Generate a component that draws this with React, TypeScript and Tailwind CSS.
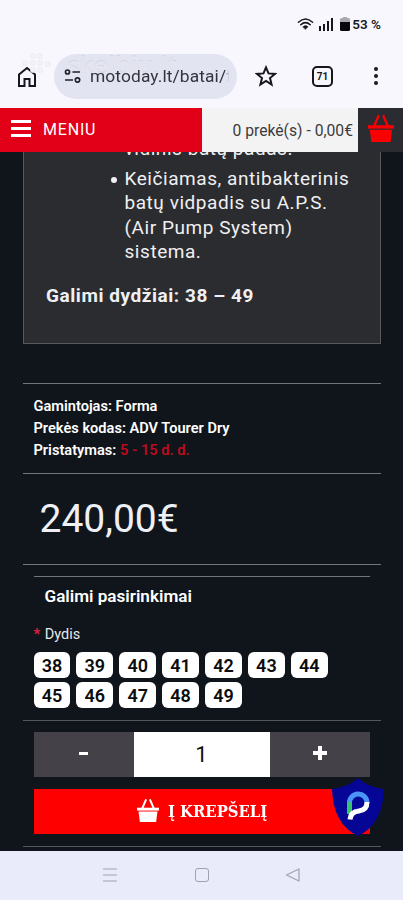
import React from "react"

const sizes = ["38", "39", "40", "41", "42", "43", "44", "45", "46", "47", "48", "49"]

const Basket = ({ className }: { className?: string }) => (
    <svg viewBox="0 0 26 27" className={className} fill="currentColor">
        <path d="M0 10.2h26v3.4H0z" />
        <path d="M1.8 14.800h22.4L22.6 27H3.4z" />
        <path d="M6.2 11 10.4 1.2M19.8 11 15.6 1.2" fill="none" stroke="currentColor" strokeWidth="2.4" strokeLinecap="round" />
    </svg>
)

const StatusBar = () => (
    <div className="h-12 flex items-center justify-end pr-[22px] shrink-0">
        <svg viewBox="0 0 18 14" className="w-[17px] h-[14px] mr-[5px]" fill="none" stroke="#17171f" strokeLinecap="round">
            <path d="M1.5 5.2Q9-1.8 16.5 5.2" strokeWidth="1.5" />
            <path d="M4 7.8q5-4.4 10 0" strokeWidth="1.7" />
            <path d="M6.3 9.8Q9 7.6 11.7 9.8L9 12.6z" fill="#17171f" strokeWidth=".6" />
        </svg>
        <div className="flex items-end gap-[2px] h-[13px] mr-[7px]">
            <div className="w-[2px] h-[5px] bg-[#17171f]" />
            <div className="w-[2px] h-[7px] bg-[#17171f]" />
            <div className="w-[2px] h-[10px] bg-[#17171f]" />
            <div className="w-[2px] h-[13px] bg-[#17171f]" />
        </div>
        <svg viewBox="0 0 10 14" className="w-[10px] h-[14px] mr-[2px]">
            <path d="M3 0h4v1h1.500q1.500 0 1.500 1.500V7H0V2.500Q0 1 1.500 1H3z" fill="#a9a9b2" />
            <path d="M0 5h10v7.500q0 1.500-1.500 1.500h-7Q0 14 0 12.500z" fill="#08080c" />
        </svg>
        <div className="text-[13.500px] font-semibold text-[#1a1a20] font-['Roboto',sans-serif]">53 %</div>
    </div>
)

const Watermark = () => (
    <div className="absolute left-[21px] top-[51px] flex items-center gap-[14px] pointer-events-none">
        <svg viewBox="0 0 32 26" className="w-8 h-[26px]" fill="#f3f2f8" stroke="#e6e5ee" strokeWidth=".6">
            <circle cx="12" cy="4" r="2.600" />
            <circle cx="19" cy="4" r="2.600" />
            <circle cx="4" cy="11" r="2.600" />
            <circle cx="12" cy="11" r="2.600" />
            <circle cx="19" cy="11" r="2.600" />
            <circle cx="27" cy="12" r="2.600" />
            <circle cx="12" cy="18" r="2.600" />
            <circle cx="19" cy="18" r="2.600" />
        </svg>
        <div className="text-[25px] leading-7 font-semibold text-[#e8e8f2]/80 [text-shadow:0_-1px_0_#d5d6e1] font-['Open_Sans',sans-serif]">skelbiu.lt</div>
    </div>
)

const BrowserBar = () => (
    <div className="h-[60px] flex items-center pl-[17px] pb-[4px] shrink-0">
        <svg viewBox="0 0 20 22" className="w-5 h-[22px] mt-[1px]" fill="none" stroke="#17171f" strokeWidth="2">
            <path d="M2 8.500 10 2l8 6.500V20h-5.500v-7h-5v7H2z" />
        </svg>
        <div className="ml-[17px] w-[183px] h-[45px] rounded-full bg-[#e3e4f2] flex items-center pl-[10px] overflow-hidden">
            <svg viewBox="0 0 17 14" className="relative z-10 w-[17px] h-[14px] shrink-0" fill="none" stroke="#22222b" strokeWidth="1.700">
                <circle cx="3.500" cy="3" r="2" />
                <path d="M8.500 3H16M1 11h8" />
                <circle cx="13.500" cy="11" r="2.200" />
            </svg>
            <div className="relative z-10 ml-[9px] w-[139px] overflow-hidden whitespace-nowrap text-[17.400px] text-[#33343f] font-['Roboto',sans-serif] tracking-[0.1px] [mask-image:linear-gradient(to_right,black_97%,transparent)]">motoday.lt/batai/f</div>
        </div>
        <svg viewBox="0 0 22 22" className="ml-[18px] w-[22px] h-[22px]" fill="none" stroke="#17171f" strokeWidth="2">
            <path d="m11 2.400 2.500 6 6.500.5-5 4.200 1.600 6.400-5.600-3.500-5.600 3.500L7 13.100 2 8.900l6.500-.5z" />
        </svg>
        <div className="ml-[35px] w-[21px] h-[21px] rounded-[5px] border-2 border-[#17171f] flex items-center justify-center text-[10px] font-bold text-[#17171f] font-['Roboto',sans-serif]">71</div>
        <div className="ml-[41px] flex flex-col gap-[3px]">
            <div className="w-1 h-1 rounded-full bg-[#17171f]" />
            <div className="w-1 h-1 rounded-full bg-[#17171f]" />
            <div className="w-1 h-1 rounded-full bg-[#17171f]" />
        </div>
    </div>
)

const SiteHeader = () => (
    <div className="h-11 flex shrink-0 font-['Roboto',sans-serif]">
        <div className="w-[202px] bg-[#e20018] flex items-center pl-[11px] pb-[3px]">
            <div className="flex flex-col gap-[4px]">
                <div className="w-[20px] h-[3px] bg-white" />
                <div className="w-[20px] h-[3px] bg-white" />
                <div className="w-[20px] h-[3px] bg-white" />
            </div>
            <div className="ml-[12px] mt-[2px] text-base text-white tracking-[0.8px]">MENIU</div>
        </div>
        <div className="w-[156px] bg-[#f3f3f3] flex items-center justify-end pr-[5px] pt-[1px] text-[15.700px] text-[#3c3c3e] whitespace-nowrap">0 prekė(s) - 0,00€</div>
        <div className="flex-1 bg-[#2b2c31] flex justify-center pt-[7px]">
            <Basket className="w-[26px] h-[27px] text-[#fb0000]" />
        </div>
    </div>
)

const Description = () => (
    <div className="h-[191.500px] border border-t-0 border-[#58595d] bg-[#2b2c30] overflow-hidden text-[19px] leading-[24.6px] tracking-[0.550px] text-[#f0f0f3]">
        <ul className="pl-[101px] -mt-[15px]">
            <li className="mb-[5px]">vidinis batų padas.</li>
            <li className="relative before:absolute before:-left-[14px] before:top-[10px] before:w-[6px] before:h-[6px] before:rounded-full before:bg-[#f0f0f3]">Keičiamas, antibakterinis<br />batų vidpadis su A.P.S.<br />(Air Pump System)<br />sistema.</li>
        </ul>
        <div className="mt-[19.500px] pl-[22.500px] font-bold">Galimi dydžiai: 38 – 49</div>
    </div>
)

const Shield = () => (
    <svg viewBox="0 0 54 60" className="absolute left-[331px] top-[777px] w-[54px] h-[60px]">
        <path d="M27 1q9 9 26 11-1 35-26 47Q2 47 1 12 18 10 27 1z" fill="#050596" />
        <path d="M18.500 26a8.500 8.500 0 0 1 17.500-.5" fill="none" stroke="#4a94f8" strokeWidth="5" />
        <path d="M18.500 25v12" stroke="#35c46c" strokeWidth="5" />
        <path d="M36 25c0 6-3.500 8.500-8 9-5 .5-8.500 2.500-9 8.500" fill="none" stroke="#fff" strokeWidth="5" />
    </svg>
)

const NavBar = () => (
    <div className="h-[49px] bg-[#e9ebfa] flex items-center justify-between pl-[102px] pr-[103px] pb-[1px] shrink-0">
        <svg viewBox="0 0 16 16" className="w-4 h-4" stroke="#a0a1ae" strokeWidth="1.200"><path d="M1 2h14M1 8h14M1 14h14" /></svg>
        <div className="w-[14px] h-[14px] rounded-[3px] border border-[#a0a1ae]" />
        <svg viewBox="0 0 15 16" className="w-[15px] h-4" fill="none" stroke="#a0a1ae" strokeWidth="1.200" strokeLinejoin="round"><path d="M14 2v12L1.500 8z" /></svg>
    </div>
)

const App = () => {
    return (
        <div className="relative w-[403px] h-[900px] overflow-hidden flex flex-col bg-[#f8f7fe]">
            <StatusBar />
            <BrowserBar />
            <Watermark />
            <SiteHeader />
            <div className="h-[699px] shrink-0 overflow-hidden bg-[#10151b] px-[22.500px] text-white font-['Roboto',sans-serif]">
                <Description />
                <div className="mt-[39.500px] border-y border-[#737679] h-[91px] pl-[11px] pt-[11px] text-[14.600px] leading-[22px] font-semibold">
                    <div>Gamintojas: Forma</div>
                    <div>Prekės kodas: ADV Tourer Dry</div>
                    <div>Pristatymas: <span className="text-[#bd0b1d]">5 - 15 d. d.</span></div>
                </div>
                <div className="h-[91px] border-b border-[#737679] pl-[17px] flex items-center text-[39px] text-[#eef0f5]">240,00€</div>
                <div className="mt-[11px] mx-[11px] h-[145px] border-t border-[#737679]">
                    <div className="pl-[11px] pt-[7px] text-[17.100px] leading-6 font-semibold">Galimi pasirinkimai</div>
                    <div className="mt-[17px] text-[14.500px] leading-5 text-[#e6e8ea]"><span className="text-[#e0203c] font-bold tracking-[1px]">*</span> Dydis</div>
                    <div className="mt-[7px] flex flex-wrap gap-x-[6px] gap-y-1">
                        {sizes.map((size) => (
                            <div key={size} className="w-[36.900px] h-[26px] rounded-[6px] bg-white text-[#0c0c0c] flex items-center justify-center text-[18px] font-semibold">{size}</div>
                        ))}
                    </div>
                </div>
                <div className="-mt-[1px] h-[127px] border-y border-[#55585b] px-[11px] pt-[11px]">
                    <div className="h-[45px] flex">
                        <div className="w-[100px] bg-[#444248] flex items-center justify-center pb-[2px]"><div className="w-[9px] h-[3px] bg-white" /></div>
                        <div className="flex-1 bg-white text-[#111] text-[22px] flex items-center justify-center">1</div>
                        <div className="w-[100px] bg-[#444248] flex items-center justify-center pb-[3px]">
                            <svg viewBox="0 0 14 14" className="w-[14px] h-[14px]" stroke="#fff" strokeWidth="4"><path d="M7 0v14M0 7h14" /></svg>
                        </div>
                    </div>
                    <div className="mt-[12px] h-[45px] bg-[#fe0000] flex items-center pl-[103px]">
                        <Basket className="w-[22px] h-[23px] mb-[2px]" />
                        <div className="ml-[9px] w-[100px] origin-left scale-x-[0.970] whitespace-nowrap text-[17px] font-bold font-['DejaVu_Serif_Condensed','DejaVu_Serif',serif]">Į KREPŠELĮ</div>
                    </div>
                </div>
            </div>
            <NavBar />
            <Shield />
        </div>
    )
};

export default App;
